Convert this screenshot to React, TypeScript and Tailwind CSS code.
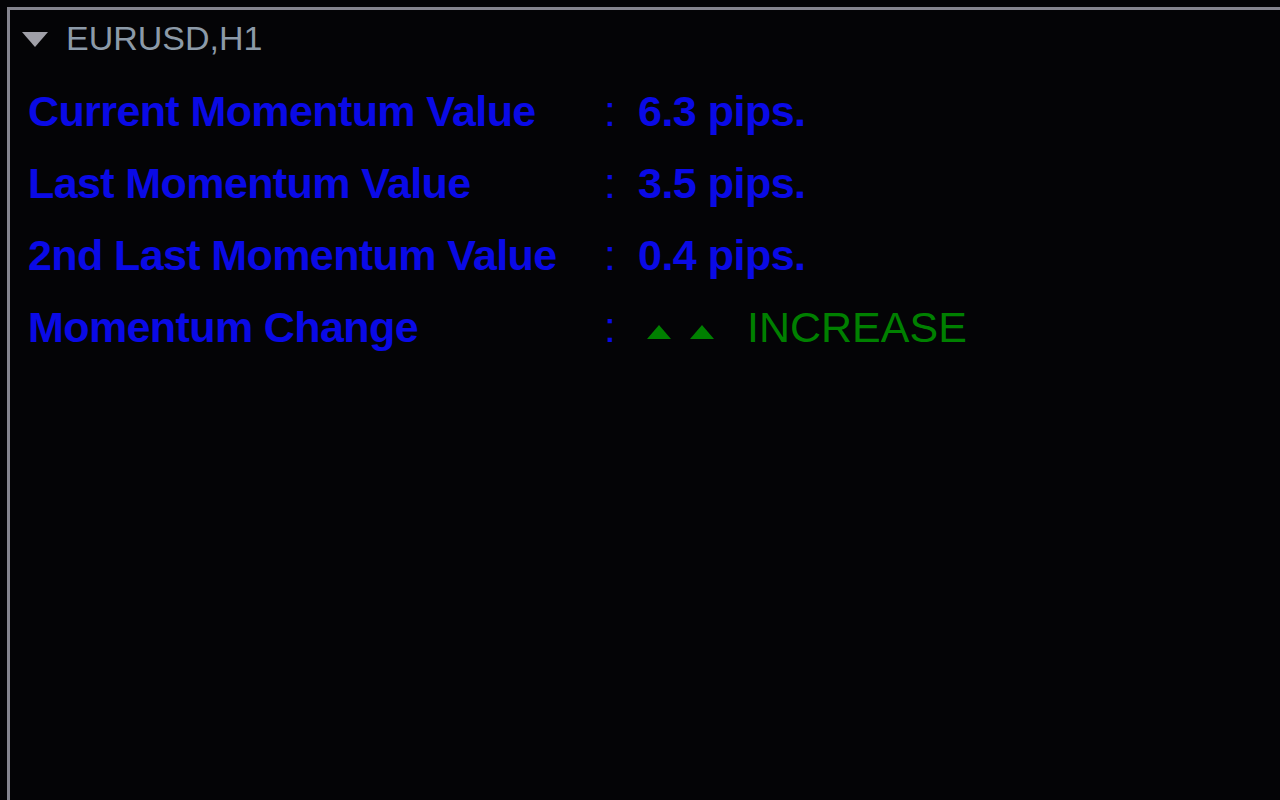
const rows = [
  { label: 'Current Momentum Value', value: '6.3 pips.' },
  { label: 'Last Momentum Value', value: '3.5 pips.' },
  { label: '2nd Last Momentum Value', value: '0.4 pips.' },
];

function UpArrow() {
  return (
    <svg width="26" height="16" viewBox="0 0 26 16" className="block">
      <polygon points="13,1 25,15 1,15" fill="#008000" />
    </svg>
  );
}

export default function App() {
  return (
    <div className="h-[800px] w-full overflow-hidden bg-[#040406] pl-[7px] pt-[7px]" style={{ fontFamily: '"Liberation Sans", Arial, sans-serif' }}>
      <div className="h-full border-l-[3px] border-t-[3px] border-[#84848e]">
        {/* header */}
        <div className="flex items-start pl-[12px] pt-[8px]">
          <svg width="26" height="16" viewBox="0 0 26 16" className="mt-[14px] block">
            <polygon points="0,0 26,0 13,15" fill="#a0a0a8" />
          </svg>
          <span className="ml-[18px] text-[34px] leading-[40px] text-[#8c9aa8]">EURUSD,H1</span>
        </div>

        {/* values */}
        <div className="mt-[17px] pl-[18px] text-[43px] font-semibold leading-[72px] text-[#0a0ae6]">
          {rows.map((r) => (
            <div key={r.label} className="flex">
              <span className="w-[576px] tracking-[-0.6px]">{r.label}</span>
              <span className="w-[34px] font-normal">:</span>
              <span className="tracking-[-0.5px]">{r.value}</span>
            </div>
          ))}
          <div className="flex">
            <span className="w-[576px] tracking-[-0.6px]">Momentum Change</span>
            <span className="w-[34px] font-normal">:</span>
            <span className="flex items-center gap-[17px] pl-[8px] pt-[10px]">
              <UpArrow />
              <UpArrow />
            </span>
            <span className="ml-[32px] font-normal text-[#008000]">INCREASE</span>
          </div>
        </div>
      </div>
    </div>
  );
}
